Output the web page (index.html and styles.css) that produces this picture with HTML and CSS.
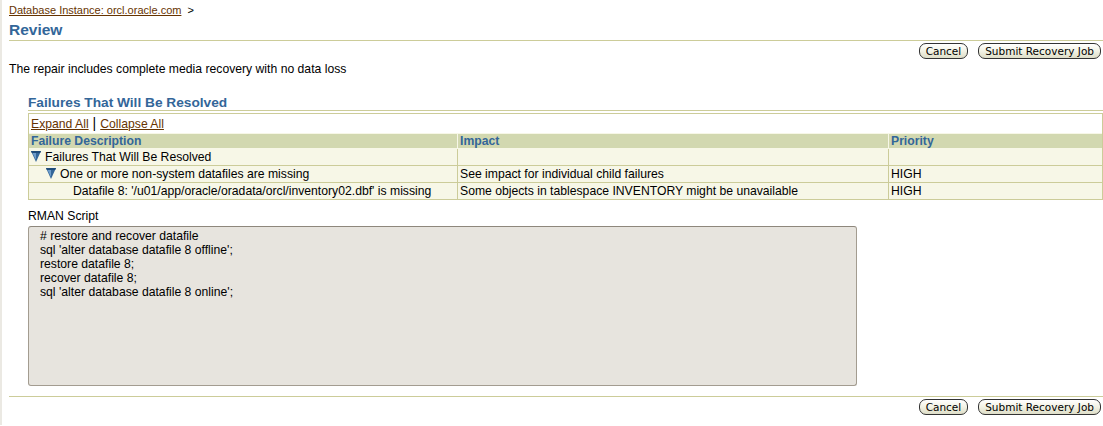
FILE: index.html
```html
<!DOCTYPE html>
<html>
<head>
<meta charset="utf-8">
<link rel="stylesheet" href="styles.css">
</head>
<body>
<div class="page">
  <div class="crumbs"><a href="#" class="link">Database Instance: orcl.oracle.com</a><span class="sep">&gt;</span></div>
  <h1 class="title">Review</h1>
  <div class="btnbar"><button class="btn">Cancel</button><button class="btn">Submit Recovery Job</button></div>
  <p class="intro">The repair includes complete media recovery with no data loss</p>
  <div class="section">
    <h2 class="subtitle">Failures That Will Be Resolved</h2>
    <div class="tablebox">
      <div class="controls"><a href="#" class="link">Expand All</a><span class="bar">|</span><a href="#" class="link">Collapse All</a></div>
      <table class="grid">
        <thead>
          <tr><th class="c1">Failure Description</th><th class="c2">Impact</th><th class="c3">Priority</th></tr>
        </thead>
        <tbody>
          <tr>
            <td class="lvl0"><svg class="tri" width="10" height="11" viewBox="0 0 10 11"><polygon points="0,0 10,0 5,11" fill="#336699"/><polygon points="1,1 5,1 5,9" fill="#6d9ccb"/><polygon points="0,0 10,0 9.2,2 0.8,2" fill="#1e4b7a"/></svg>Failures That Will Be Resolved</td>
            <td></td><td></td>
          </tr>
          <tr>
            <td class="lvl1"><svg class="tri" width="10" height="11" viewBox="0 0 10 11"><polygon points="0,0 10,0 5,11" fill="#336699"/><polygon points="1,1 5,1 5,9" fill="#6d9ccb"/><polygon points="0,0 10,0 9.2,2 0.8,2" fill="#1e4b7a"/></svg>One or more non-system datafiles are missing</td>
            <td>See impact for individual child failures</td><td>HIGH</td>
          </tr>
          <tr>
            <td class="lvl2">Datafile 8: '/u01/app/oracle/oradata/orcl/inventory02.dbf' is missing</td>
            <td>Some objects in tablespace INVENTORY might be unavailable</td><td>HIGH</td>
          </tr>
        </tbody>
      </table>
    </div>
    <div class="label">RMAN Script</div>
    <div class="script"># restore and recover datafile
sql 'alter database datafile 8 offline';
restore datafile 8;
recover datafile 8;
sql 'alter database datafile 8 online';</div>
  </div>
  <div class="btnbar bottom"><button class="btn">Cancel</button><button class="btn">Submit Recovery Job</button></div>
</div>
</body>
</html>
```
FILE: styles.css
```css
html, body { margin: 0; padding: 0; background: #fff; }
body { font-family: "Liberation Sans", Arial, sans-serif; font-size: 12.2px; color: #000; }
.page {
  border-left: 2px solid #ebe9e3;
  min-height: 425px;
  padding: 0 0 0 7px;
  box-sizing: border-box;
}
.link { color: #663300; text-decoration: underline; }
.crumbs { font-size: 11px; padding-top: 4px; line-height: 13px; }
.sep { margin-left: 6px; color: #000; }
.title {
  margin: 4px 0 0 0;
  font-size: 15.5px;
  line-height: 18px;
  color: #336699;
  font-weight: bold;
  padding-bottom: 1px;
  border-bottom: 1px solid #cccc99;
}
.btnbar { display: flex; justify-content: flex-end; gap: 10px; padding: 2px 2px 0 0; }
.btn {
  font-family: "DejaVu Sans", sans-serif;
  font-size: 10.5px;
  height: 16px;
  line-height: 13px;
  padding: 0 6px;
  border: 1px solid #333;
  border-radius: 7px;
  background: linear-gradient(#ffffff, #f2f2e4 50%, #dedec8);
  color: #000;
}
.intro { margin: 3px 0 0 0; line-height: 14px; }
.section { margin: 19px 0 0 19px; }
.subtitle {
  margin: 0;
  font-size: 13.7px;
  line-height: 15px;
  color: #336699;
  font-weight: bold;
  border-bottom: 1px solid #cccc99;
  padding-bottom: 0;
}
.tablebox { margin-top: 2px; border: 1px solid #cccc99; border-bottom: none; }
.controls { padding: 2px 2px 1px 2px; line-height: 15px; background: #fff; }
.bar { margin: 0 4px 0 4px; font-size: 14px; }
.grid { width: 100%; border-collapse: collapse; }
.grid th {
  background: #d2d8b0;
  color: #336699;
  font-weight: bold;
  text-align: left;
  padding: 0 2px;
  line-height: 14px;
  border: 1px solid #f7f7e7;
}
.grid td {
  background: #f7f7e7;
  padding: 1px 2px;
  line-height: 14px;
  height: 14px;
  border: 1px solid #cccc99;
  white-space: nowrap;
}
.grid tr > :first-child { border-left: none; }
.grid tr > :last-child { border-right: none; }
.c1 { width: 424px; }
.c2 { width: 426px; }
.tri { vertical-align: -1px; margin-right: 4px; }
.lvl0 { padding-left: 2px !important; }
.lvl1 { padding-left: 17px !important; }
.lvl2 { padding-left: 44px !important; }
.label { margin-top: 9px; line-height: 14px; }
.script {
  margin-top: 3px;
  width: 829px;
  height: 160px;
  box-sizing: border-box;
  background: #e7e4de;
  border: 1px solid #a39c90;
  border-top-color: #8e877c;
  border-radius: 3px;
  padding: 2px 11px;
  white-space: pre;
  line-height: 14px;
}
.bottom { border-top: 1px solid #cccc99; margin-top: 10px; padding-top: 2px; }
```
